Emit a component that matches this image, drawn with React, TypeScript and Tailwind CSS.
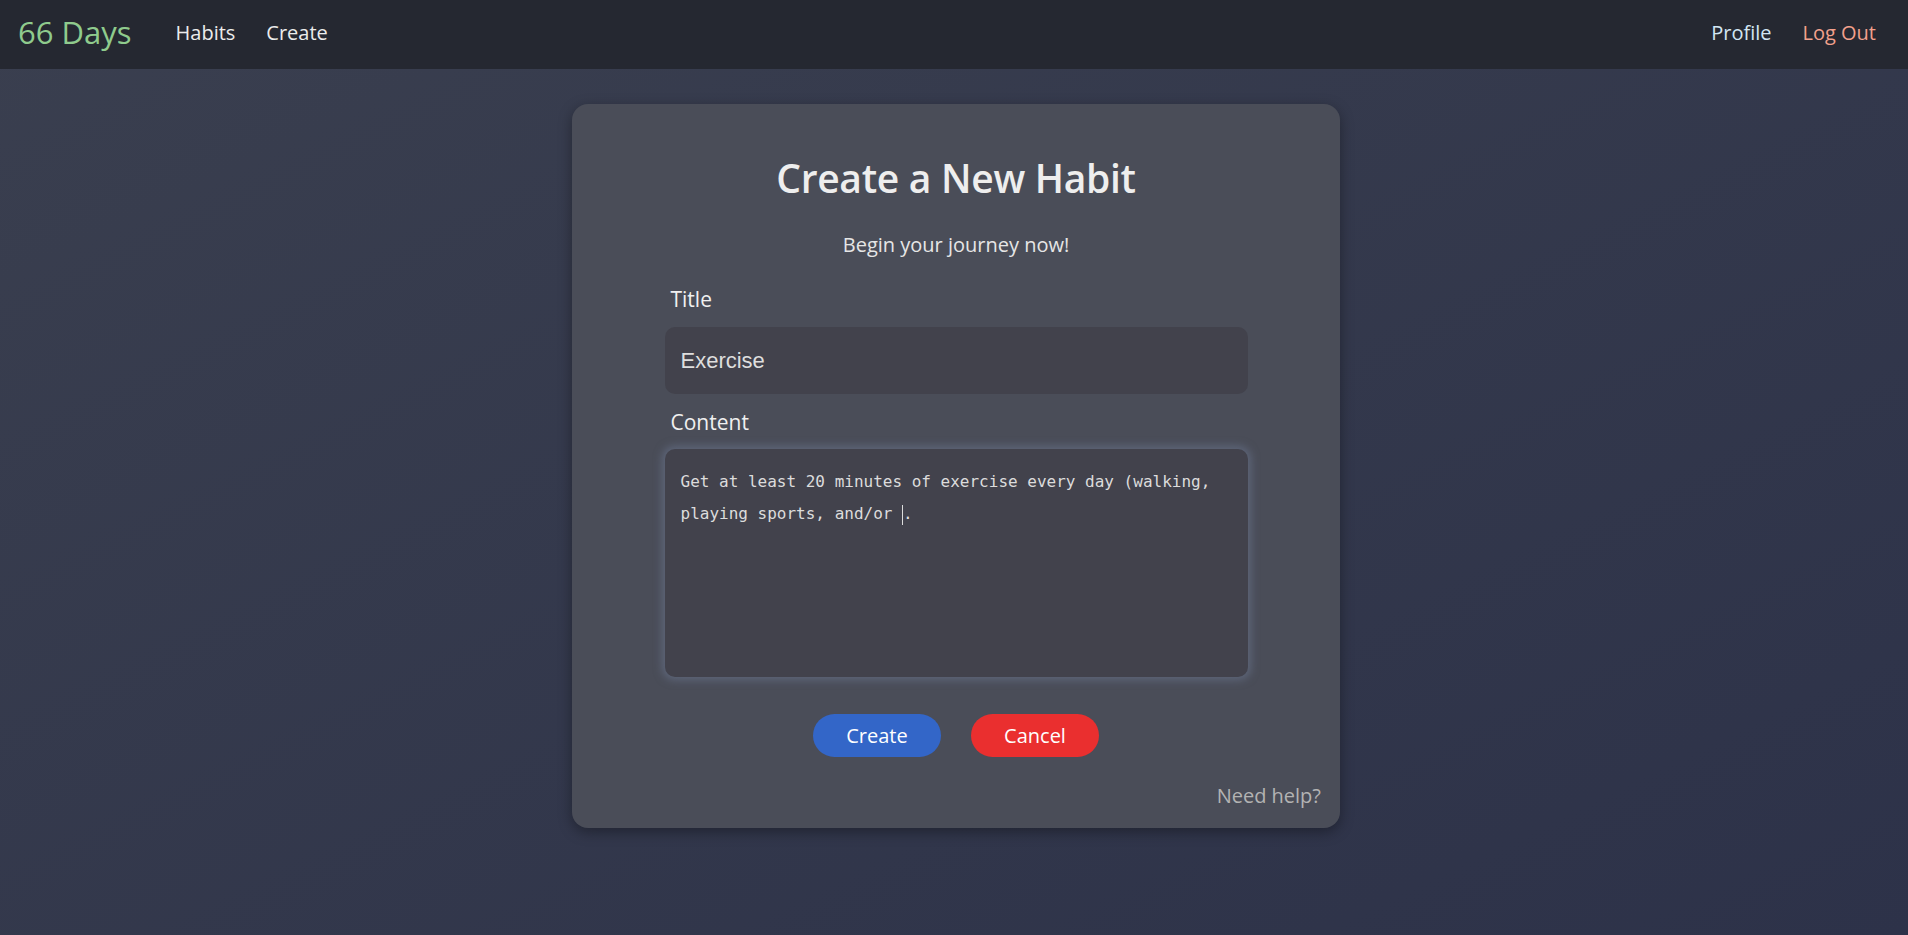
import React from "react";

export default function App() {
  const sans = { fontFamily: '"Open Sans", "Noto Sans", sans-serif' };
  return (
    <div
      className="min-h-[935px] w-full flex flex-col bg-gradient-to-br from-[#3a3f4f] to-[#2d3249]"
      style={sans}
    >
      <nav className="h-[69px] bg-[#252831] flex items-center justify-between pl-[18px] pr-[32px] pb-[4px] shrink-0">
        <div className="flex items-center">
          <span className="text-[31px] text-[#8fcb8d] leading-none">66 Days</span>
          <span className="ml-[44px] text-[20px] text-[#ececec]">Habits</span>
          <span className="ml-[31px] text-[20px] text-[#ececec]">Create</span>
        </div>
        <div className="flex items-center">
          <span className="text-[20px] text-[#d2e6f3]">Profile</span>
          <span className="ml-[31px] text-[20px] text-[#f2a08c]">Log Out</span>
        </div>
      </nav>

      <div className="flex justify-center pt-[35px] pl-[4px]">
        <div className="w-[768px] h-[724px] bg-[#4a4d58] rounded-[16px] shadow-[0_4px_14px_rgba(0,0,0,0.35)] flex flex-col items-center pt-[47px] pb-[18px] px-[19px]">
          <h1 className="text-[39px] font-semibold leading-[54px] tracking-[-0.3px] text-[#eeeeee]">
            Create a New Habit
          </h1>
          <p className="mt-[26px] text-[20px] leading-[28px] text-[#e6e6e6]">
            Begin your journey now!
          </p>
          <div className="w-[583px] mt-[26px] flex flex-col">
            <label className="pl-[6px] text-[21px] leading-[28px] text-[#f0f0f0]">Title</label>
            <div
              className="mt-[14px] h-[67px] rounded-[10px] bg-[#42424c] flex items-center px-[16px] text-[22px] text-[#dedede]"
              style={{ fontFamily: '"Liberation Sans", Arial, sans-serif' }}
            >
              Exercise
            </div>
            <label className="mt-[14px] pl-[6px] text-[21px] leading-[28px] text-[#f0f0f0]">Content</label>
            <div
              className="mt-[13px] h-[228px] rounded-[10px] bg-[#42424c] px-[16px] pt-[17px] text-[16px] leading-[32px] text-[#dcdcdc] shadow-[0_0_8px_3px_rgba(110,122,150,0.55)]"
              style={{ fontFamily: '"DejaVu Sans Mono", "Liberation Mono", monospace' }}
            >
              <div>Get at least 20 minutes of exercise every day (walking,</div>
              <div>
                playing sports, and/or <span className="inline-block w-[1px] h-[20px] bg-[#dcdcdc] align-middle"></span>.
              </div>
            </div>
          </div>
          <div className="mt-[37px] flex gap-[30px]">
            <button className="w-[128px] h-[43px] rounded-full bg-[#3366c8] text-white text-[20px]">Create</button>
            <button className="w-[128px] h-[43px] rounded-full bg-[#ea2f2f] text-white text-[20px]">Cancel</button>
          </div>
          <div className="mt-[25px] self-end text-[20px] leading-[28px] text-[#b3b3b3]">Need help?</div>
        </div>
      </div>
    </div>
  );
}
